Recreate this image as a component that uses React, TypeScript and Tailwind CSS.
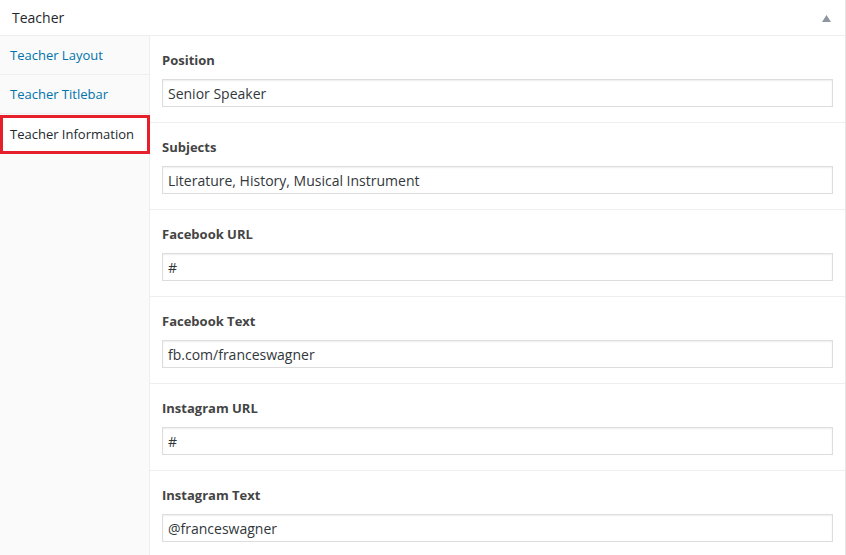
const tabs = ["Teacher Layout", "Teacher Titlebar", "Teacher Information"];

const fields = [
  { label: "Position", value: "Senior Speaker" },
  { label: "Subjects", value: "Literature, History, Musical Instrument" },
  { label: "Facebook URL", value: "#" },
  { label: "Facebook Text", value: "fb.com/franceswagner" },
  { label: "Instagram URL", value: "#" },
  { label: "Instagram Text", value: "@franceswagner" },
];

export default function App() {
  return (
    <div
      className="w-[846px] h-[555px] overflow-hidden bg-white"
      style={{ fontFamily: '"Open Sans", "Noto Sans", sans-serif' }}
    >
      <div className="h-full border-r border-[#e5e5e5] flex flex-col">
        <div className="h-[36px] shrink-0 border-b border-[#eeeeee] flex items-center justify-between pl-[12px] pr-[14px]">
          <h2 className="text-[14px] text-[#23282d] leading-none">Teacher</h2>
          <svg width="9" height="7" viewBox="0 0 9 7" className="mt-[1px]">
            <polygon points="4.5,0 9,7 0,7" fill="#8f96a0" />
          </svg>
        </div>

        <div className="flex flex-1 min-h-0">
          <ul className="w-[150px] shrink-0 bg-[#fafafa] border-r border-[#eeeeee]">
            {tabs.map((t, i) =>
              i === 2 ? (
                <li
                  key={t}
                  className="h-[39px] mt-[1px] -mr-[1px] bg-white border-[3px] border-[#e5202a] flex items-center pl-[7px] text-[13px] text-[#23282d]"
                >
                  {t}
                </li>
              ) : (
                <li
                  key={t}
                  className="h-[39px] border-b border-[#eeeeee] flex items-center pl-[10px] pt-[2px] text-[13px] text-[#0073aa]"
                >
                  {t}
                </li>
              )
            )}
          </ul>

          <div className="flex-1">
            {fields.map((f) => (
              <div
                key={f.label}
                className="h-[87px] border-b border-[#eeeeee] px-[12px] pt-[15px]"
              >
                <div className="h-[18px] leading-[18px] text-[13px] font-bold text-[#444444] mb-[10px]">
                  {f.label}
                </div>
                <div className="h-[28px] border border-[#dddddd] shadow-[inset_0_1px_2px_rgba(0,0,0,0.07)] flex items-center px-[5px] text-[14px] text-[#32373c]">
                  {f.value}
                </div>
              </div>
            ))}
          </div>
        </div>
      </div>
    </div>
  );
}
